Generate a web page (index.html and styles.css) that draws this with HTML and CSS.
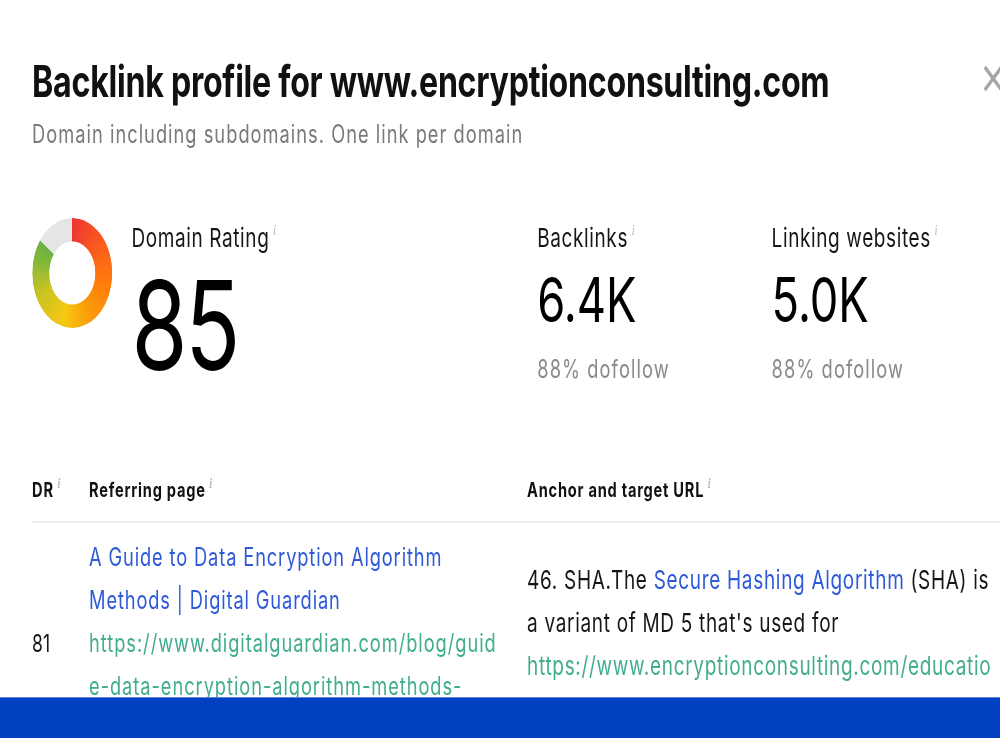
FILE: index.html
```html
<!DOCTYPE html>
<html lang="en">
<head>
<meta charset="utf-8">
<title>Backlink profile</title>
<link rel="stylesheet" href="styles.css">
</head>
<body>
<div class="viewport">
  <div class="page">
    <header class="head">
      <div class="head-text">
        <h1 class="title">Backlink profile for www.encryptionconsulting.com</h1>
        <p class="subtitle">Domain including subdomains. One link per domain</p>
      </div>
      <button class="close" aria-label="Close">
        <svg viewBox="0 0 27 27" width="27" height="27"><path d="M2 2 L25 25 M25 2 L2 25" stroke="#a6a6a6" stroke-width="4" fill="none"/></svg>
      </button>
    </header>

    <section class="stats">
      <div class="stat-dr">
        <div class="donut"></div>
        <div class="dr-text">
          <div class="label">Domain Rating<span class="info">i</span></div>
          <div class="dr-value">85</div>
        </div>
      </div>
      <div class="stat stat-bl">
        <div class="label">Backlinks<span class="info">i</span></div>
        <div class="value">6.4K</div>
        <div class="sub">88% dofollow</div>
      </div>
      <div class="stat">
        <div class="label">Linking websites<span class="info">i</span></div>
        <div class="value">5.0K</div>
        <div class="sub">88% dofollow</div>
      </div>
    </section>

    <table class="table">
      <thead>
        <tr>
          <th class="c-dr">DR<span class="info">i</span></th>
          <th class="c-ref">Referring page<span class="info">i</span></th>
          <th class="c-anchor">Anchor and target URL<span class="info">i</span></th>
        </tr>
      </thead>
      <tbody>
        <tr>
          <td class="c-dr">81</td>
          <td class="c-ref">
            <a class="link">A Guide to Data Encryption Algorithm Methods | Digital Guardian</a>
            <div class="url">https://www.digitalguardian.com/blog/guide-data-encryption-algorithm-methods-techniques</div>
          </td>
          <td class="c-anchor">
            <div class="anchor">46. SHA.The <a class="link">Secure Hashing Algorithm</a> (SHA) is a variant of MD 5 that's used for</div>
            <div class="url">https://www.encryptionconsulting.com/education-center/what-is-sha/</div>
          </td>
        </tr>
      </tbody>
    </table>
  </div>
  <div class="bottom-bar"></div>
</div>
</body>
</html>
```

FILE: styles.css
```css
html, body {
  margin: 0;
  padding: 0;
  background: #fff;
}
body {
  width: 1000px;
  height: 750px;
  overflow: hidden;
  font-family: Inter, Roboto, "Liberation Sans", Arial, sans-serif;
  color: #161616;
}
.viewport {
  position: relative;
  width: 1000px;
  height: 738px;
  overflow: hidden;
}
.page {
  width: 1370px;
  box-sizing: border-box;
  padding: 55px 0 0 44px;
  transform: scaleX(0.73);
  transform-origin: 0 0;
}
.head {
  display: flex;
  justify-content: space-between;
  align-items: flex-start;
}
.title {
  margin: 0;
  font-size: 44px;
  line-height: 52px;
  font-weight: 700;
  color: #111;
  letter-spacing: -0.35px;
}
.subtitle {
  margin: 13px 0 0;
  font-size: 25px;
  line-height: 29px;
  letter-spacing: 1.4px;
  color: #7a7a7a;
}
.close {
  margin: 10px -4px 0 0;
  padding: 0;
  border: 0;
  background: none;
  width: 27px;
  height: 27px;
}
.close svg { display: block; }

.stats {
  display: flex;
  margin-top: 69px;
  align-items: flex-start;
}
.stat-dr {
  display: flex;
  width: 692px;
  gap: 26px;
}
.donut {
  width: 110px;
  height: 110px;
  border-radius: 50%;
  flex: none;
  background: conic-gradient(#ef3636 0deg, #f9561f 45deg, #ff7a0c 100deg, #fb9c0a 150deg, #f6c813 195deg, #c9c324 245deg, #83b83a 285deg, #6cb242 306deg, #e5e5e5 306deg, #e5e5e5 360deg);
  -webkit-mask: radial-gradient(circle, transparent 31px, #000 32px);
  mask: radial-gradient(circle, transparent 31px, #000 32px);
}
.dr-text {
  padding-top: 4px;
}
.label {
  font-size: 26px;
  line-height: 32px;
  letter-spacing: 0.85px;
  color: #161616;
}
.info {
  font-family: "Liberation Serif", "DejaVu Serif", serif;
  font-style: italic;
  font-size: 15px;
  line-height: 0;
  letter-spacing: 0;
  color: #b8b8b8;
  vertical-align: 12px;
  margin-left: 5px;
}
.dr-value {
  margin-top: 9px;
  font-size: 124px;
  line-height: 124px;
  letter-spacing: -3px;
  color: #000;
}
.stat {
  padding-top: 4px;
}
.stat-bl {
  width: 321px;
}
.value {
  margin-top: 11px;
  font-size: 62px;
  line-height: 70px;
  color: #000;
}
.sub {
  margin-top: 19px;
  font-size: 25px;
  line-height: 30px;
  letter-spacing: 1.5px;
  color: #8a8a8a;
}

.table {
  margin-top: 91px;
  width: 1326px;
  border-collapse: collapse;
  table-layout: fixed;
}
.table th {
  text-align: left;
  font-size: 20px;
  line-height: 24px;
  font-weight: 700;
  letter-spacing: 1.05px;
  color: #111;
  padding: 0 0 19px;
  border-bottom: 2px solid #ececec;
}
.table th .info {
  vertical-align: 9px;
  font-size: 14px;
}
.c-dr { width: 78px; }
.c-ref { width: 600px; }
.table td {
  vertical-align: middle;
  font-size: 25px;
  line-height: 43px;
  padding: 13px 0 0;
}
.table td.c-ref {
  padding-right: 30px;
  letter-spacing: 1.2px;
}
.table td.c-ref .url {
  letter-spacing: 1.3px;
}
.table td.c-anchor {
  font-size: 26px;
  letter-spacing: 0.95px;
}
.table td.c-dr {
  color: #161616;
  font-size: 24px;
}
.link {
  color: #2e5ad9;
  text-decoration: none;
}
.url {
  color: #42ad8f;
  overflow-wrap: anywhere;
}
.anchor {
  color: #161616;
}
.bottom-bar {
  position: absolute;
  left: 0;
  right: 0;
  bottom: 0;
  height: 40px;
  background: #0040c1;
  border-top: 1px solid #5d82d6;
}
```
